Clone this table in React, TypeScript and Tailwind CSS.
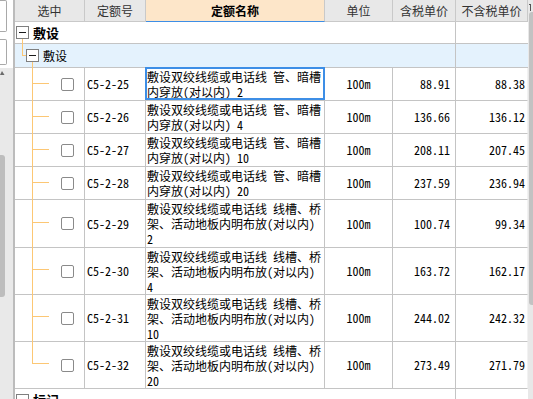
import React from 'react';

const F = "font-['Noto_Sans_CJK_SC','Noto_Sans',sans-serif]";
const HW = "[font-feature-settings:'hwid']";
const G = 'border-[#c4c4c4]';

function T({ s }: { s: string }) {
  const parts = s.split(/([ -~]+)/).filter((p) => p !== '');
  return (
    <>
      {parts.map((p, i) =>
        /^[ -~]+$/.test(p) ? (
          <span key={i} className={HW}>
            {p}
          </span>
        ) : (
          <span key={i}>{p}</span>
        )
      )}
    </>
  );
}

function MinusBox() {
  return (
    <div className="w-[13px] h-[13px] shrink-0 border border-[#7f7f7f] bg-white flex items-center justify-center">
      <div className="w-[7px] h-px bg-[#1a1a1a]" />
    </div>
  );
}

type Row = {
  code: string;
  l1: string;
  l2: string;
  l3?: string;
  p1: string;
  p2: string;
  h: string;
  mid: string;
  last?: boolean;
  sel?: boolean;
};

const rows: Row[] = [
  { code: 'C5-2-25', l1: '敷设双绞线缆或电话线 管、暗槽', l2: '内穿放(对以内) 2', p1: '88.91', p2: '88.38', h: 'h-[33px]', mid: 'top-[15px]', sel: true },
  { code: 'C5-2-26', l1: '敷设双绞线缆或电话线 管、暗槽', l2: '内穿放(对以内) 4', p1: '136.66', p2: '136.12', h: 'h-[33px]', mid: 'top-[15px]' },
  { code: 'C5-2-27', l1: '敷设双绞线缆或电话线 管、暗槽', l2: '内穿放(对以内) 10', p1: '208.11', p2: '207.45', h: 'h-[33px]', mid: 'top-[15px]' },
  { code: 'C5-2-28', l1: '敷设双绞线缆或电话线 管、暗槽', l2: '内穿放(对以内) 20', p1: '237.59', p2: '236.94', h: 'h-[33px]', mid: 'top-[15px]' },
  { code: 'C5-2-29', l1: '敷设双绞线缆或电话线 线槽、桥', l2: '架、活动地板内明布放(对以内)', l3: '2', p1: '100.74', p2: '99.34', h: 'h-[48px]', mid: 'top-[22px]' },
  { code: 'C5-2-30', l1: '敷设双绞线缆或电话线 线槽、桥', l2: '架、活动地板内明布放(对以内)', l3: '4', p1: '163.72', p2: '162.17', h: 'h-[47px]', mid: 'top-[21px]' },
  { code: 'C5-2-31', l1: '敷设双绞线缆或电话线 线槽、桥', l2: '架、活动地板内明布放(对以内)', l3: '10', p1: '244.02', p2: '242.32', h: 'h-[47px]', mid: 'top-[21px]' },
  { code: 'C5-2-32', l1: '敷设双绞线缆或电话线 线槽、桥', l2: '架、活动地板内明布放(对以内)', l3: '20', p1: '273.49', p2: '271.79', h: 'h-[47px]', mid: 'top-[21px]', last: true },
];

const ORANGE = 'bg-[#fcc774]';

function DataRow({ r }: { r: Row }) {
  return (
    <div className={`flex shrink-0 ${r.h}`}>
      <div className={`relative w-[70px] shrink-0 border-r border-b ${G} flex items-center pl-[46px]`}>
        <div className={`absolute left-[17px] top-0 w-px ${ORANGE} ${r.last ? 'h-[22px]' : '-bottom-px'}`} />
        <div className={`absolute left-[17px] ${r.mid} w-[17px] h-px ${ORANGE}`} />
        <div className="w-[13px] h-[13px] rounded-[2px] border border-[#8a8a8a] bg-white" />
      </div>
      <div className={`w-[61px] shrink-0 border-r border-b ${G} flex items-center pl-[2px]`}>
        <T s={r.code} />
      </div>
      <div className={`relative w-[179px] shrink-0 border-r border-b ${G} flex items-center pl-[1px]`}>
        {r.sel && <div className="absolute -left-px -right-px -top-px bottom-0 border-2 border-[#3d8ee6]" />}
        <div className="leading-[15px] whitespace-pre">
          <div>
            <T s={r.l1} />
          </div>
          <div>
            <T s={r.l2} />
          </div>
          {r.l3 && (
            <div>
              <T s={r.l3} />
            </div>
          )}
        </div>
      </div>
      <div className={`w-[68px] shrink-0 border-r border-b ${G} flex items-center justify-center`}>
        <T s="100m" />
      </div>
      <div className={`w-[63px] shrink-0 border-r border-b ${G} flex items-center justify-end pr-[5px]`}>
        <T s={r.p1} />
      </div>
      <div className={`w-[72px] shrink-0 border-r border-b ${G} border-r-[#f2f2f2] flex items-center justify-end pr-[2px]`}>
        <T s={r.p2} />
      </div>
    </div>
  );
}

function HCell({ w, children, name }: { w: string; children: React.ReactNode; name?: boolean }) {
  return (
    <div
      className={`${w} shrink-0 flex items-center justify-center border-r border-b ${
        name ? 'bg-[#fde6c9] border-b-[#3d8ee6] border-r-[#c9c9c9] font-bold text-black' : 'bg-[#e8e8e8] border-[#c9c9c9] text-[#333]'
      }`}
    >
      {children}
    </div>
  );
}

export default function App() {
  return (
    <div className={`w-[533px] h-[399px] overflow-hidden flex bg-white text-[12px] text-black ${F}`}>
      {/* left panel */}
      <div className="w-[13px] shrink-0 flex flex-col bg-[#e9e9e9]">
        <div className="h-[68px] shrink-0 bg-white flex flex-col">
          <div className="w-[7px] h-[32px] shrink-0 border border-l-0 border-[#a9a9a9] rounded-r-[2px] bg-white" />
          <div className="w-[7px] h-[26px] shrink-0 mt-[7px] border border-l-0 border-[#a9a9a9] rounded-r-[2px] bg-white" />
        </div>
        <div className="h-[87px] shrink-0 pt-[3px]">
          <svg width="6" height="4" viewBox="0 0 6 4">
            <path d="M0 4 L2 0 L4.5 4 Z" fill="#6a6a6a" />
          </svg>
        </div>
        <div className="w-[5px] h-[142px] shrink-0 rounded-r-[3px] bg-[#bdbdbd]" />
      </div>
      <div className="w-[2px] shrink-0 bg-[#bcbcbc]" />

      {/* table */}
      <div className="w-[513px] shrink-0 flex flex-col">
        <div className="flex h-[22px] shrink-0">
          <HCell w="w-[70px]">选中</HCell>
          <HCell w="w-[61px]">定额号</HCell>
          <HCell w="w-[179px]" name>
            定额名称
          </HCell>
          <HCell w="w-[68px]">单位</HCell>
          <HCell w="w-[63px]">含税单价</HCell>
          <HCell w="w-[72px]">不含税单价</HCell>
        </div>

        {/* group 1 */}
        <div className="flex h-[22px] shrink-0">
          <div className={`relative w-[441px] shrink-0 border-r border-b ${G} flex items-center pl-px`}>
            <div className={`absolute left-[7px] top-[17px] -bottom-px w-px ${ORANGE}`} />
            <MinusBox />
            <span className="ml-[4px] text-[13px] font-bold">敷设</span>
          </div>
          <div className={`w-[72px] shrink-0 border-b ${G}`} />
        </div>

        {/* group 2 */}
        <div className="flex h-[24px] shrink-0 bg-[#e4f2fd]">
          <div className={`relative w-[441px] shrink-0 border-r border-b ${G} flex items-center pl-[11px]`}>
            <div className={`absolute left-[7px] top-0 h-[12px] w-px ${ORANGE}`} />
            <div className={`absolute left-[7px] top-[11px] w-[4px] h-px ${ORANGE}`} />
            <div className={`absolute left-[17px] top-[18px] -bottom-px w-px ${ORANGE}`} />
            <MinusBox />
            <span className="ml-[4px]">敷设</span>
          </div>
          <div className={`w-[72px] shrink-0 border-b ${G}`} />
        </div>

        {rows.map((r) => (
          <DataRow key={r.code} r={r} />
        ))}

        {/* group 3 */}
        <div className="flex h-[22px] shrink-0">
          <div className={`w-[441px] shrink-0 border-r ${G} flex items-center pl-px`}>
            <MinusBox />
            <span className="ml-[4px] text-[13px] font-bold">标记</span>
          </div>
          <div className="w-[72px] shrink-0" />
        </div>
      </div>

      {/* right scrollbar */}
      <div className="w-[5px] shrink-0 flex flex-col bg-[#e8e8e8]">
        <div className="h-[12px] shrink-0 relative">
          <div className="absolute left-[2px] top-[4px] w-px h-[7px] bg-[#555]" />
          <div className="absolute left-[1px] top-[4px] w-px h-px bg-[#555]" />
        </div>
        <div className="ml-px h-[293px] shrink-0 rounded-l-[3px] bg-[#c2c2c2]" />
      </div>
    </div>
  );
}
